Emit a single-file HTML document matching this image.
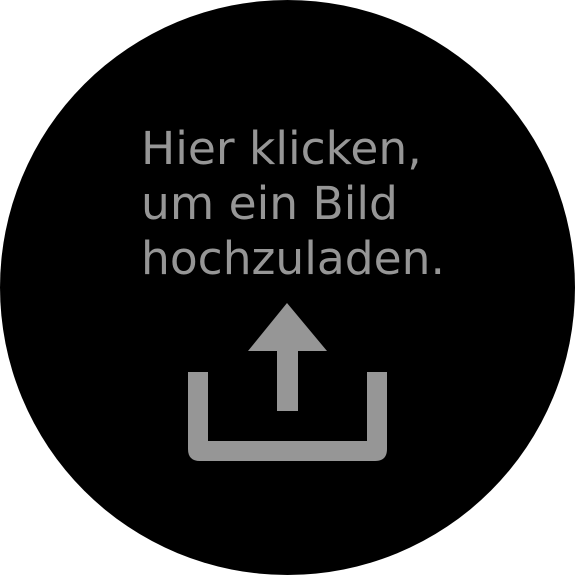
<!DOCTYPE html>
<html><head><style>
html,body{margin:0;padding:0;background:#fff;width:575px;height:575px;overflow:hidden}
.c{position:absolute;left:0;top:0;width:575px;height:575px;border-radius:50%;background:#000}
.t{position:absolute;left:141px;top:121px;font-family:"DejaVu Sans","Liberation Sans",sans-serif;font-size:45.5px;line-height:55px;color:#969696;white-space:nowrap}
svg{position:absolute;left:0;top:0}
</style></head><body>
<div class="c"></div>
<div class="t">Hier klicken,<br>um ein Bild<br>hochzuladen.</div>
<svg width="575" height="575">
<polygon points="287,303 248,351 327,351" fill="#969696"/>
<rect x="277" y="350" width="21" height="61" fill="#969696"/>
<path d="M188,372 H208 V441 H367 V372 H387 V449 Q387,461 375,461 H200 Q188,461 188,449 Z" fill="#969696"/>
</svg>
</body></html>
